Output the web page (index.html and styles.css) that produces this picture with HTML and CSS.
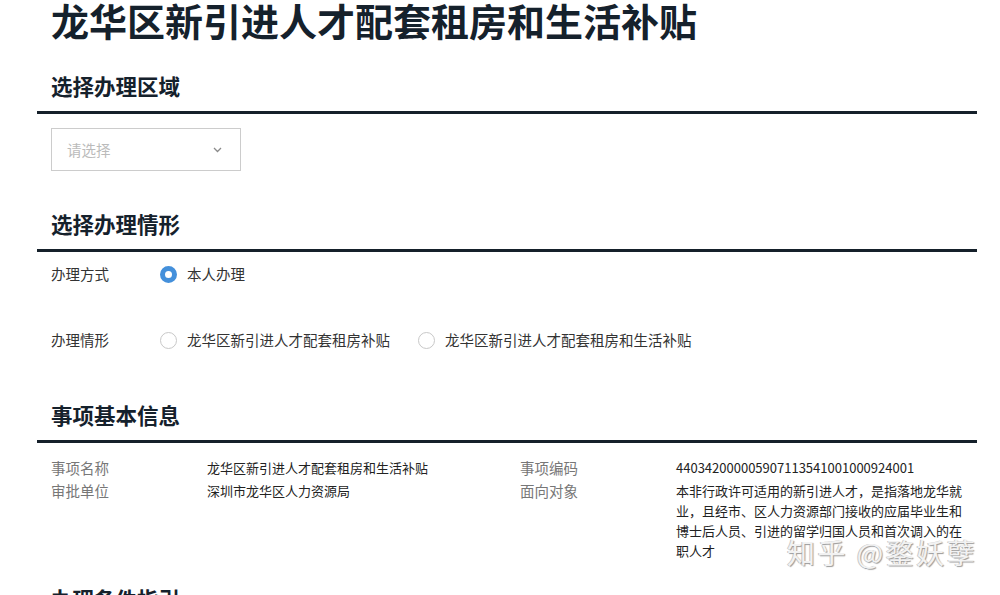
FILE: index.html
```html
<!DOCTYPE html>
<html lang="zh-CN">
  <head>
    <meta charset="UTF-8" />
    <meta name="viewport" content="width=device-width, initial-scale=1.0" />
    <title>龙华区新引进人才配套租房和生活补贴</title>
    <link rel="stylesheet" href="styles.css">
  </head>
  <body>
    <main class="page">
      <h1 class="title">龙华区新引进人才配套租房和生活补贴</h1>

      <section class="section">
        <h2 class="section-head">选择办理区域</h2>
        <div class="select">
          <span class="select-text">请选择</span>
          <svg class="select-arrow" width="9" height="6" viewBox="0 0 9 6">
            <path d="M1 1 L4.5 4.5 L8 1" fill="none" stroke="#8a8a8a" stroke-width="1.3" />
          </svg>
        </div>
      </section>

      <section class="section">
        <h2 class="section-head">选择办理情形</h2>
        <div class="form-row">
          <span class="form-label">办理方式</span>
          <label class="option"><span class="radio checked"></span>本人办理</label>
        </div>
        <div class="form-row">
          <span class="form-label">办理情形</span>
          <label class="option"><span class="radio"></span>龙华区新引进人才配套租房补贴</label>
          <label class="option"><span class="radio"></span>龙华区新引进人才配套租房和生活补贴</label>
        </div>
      </section>

      <section class="section section-info">
        <h2 class="section-head">事项基本信息</h2>
        <div class="info">
          <span class="info-label">事项名称</span>
          <span class="info-value">龙华区新引进人才配套租房和生活补贴</span>
          <span class="info-label">事项编码</span>
          <span class="info-value">440342000005907113541001000924001</span>

          <span class="info-label">审批单位</span>
          <span class="info-value">深圳市龙华区人力资源局</span>
          <span class="info-label">面向对象</span>
          <span class="info-value">本非行政许可适用的新引进人才，是指落地龙华就业，且经市、区人力资源部门接收的应届毕业生和博士后人员、引进的留学归国人员和首次调入的在职人才</span>
        </div>
      </section>

      <section class="section">
        <h2 class="section-head">办理条件指引</h2>
      </section>
    </main>

    <div class="watermark">知乎 @鍪妖孽</div>
  </body>
</html>
```

FILE: styles.css
```css
body {
  margin: 0;
  font-family: "Noto Sans CJK SC", "Noto Sans", sans-serif;
  color: #333;
  background: #fff;
}

.page {
  width: 940px;
  margin-left: 37px;
}

.title {
  margin: -2px 0 0 14px;
  font-size: 38px;
  line-height: 44px;
  font-weight: bold;
  color: #15212c;
}

.section {
  margin-top: 38px;
}

.section:first-of-type {
  margin-top: 29px;
}

.section-info + .section {
  margin-top: 23px;
}

.section-head {
  margin: 0;
  padding: 0 0 10px 14px;
  font-size: 21.5px;
  line-height: 30px;
  font-weight: bold;
  color: #15212c;
  border-bottom: 3px solid #15202a;
}

.select {
  box-sizing: border-box;
  width: 190px;
  height: 43px;
  margin: 14px 0 0 14px;
  padding: 0 18px 0 15px;
  border: 1px solid #ccc;
  display: flex;
  align-items: center;
  justify-content: space-between;
}

.select-text {
  font-size: 14.5px;
  color: #bbb;
}

.form-row {
  height: 44px;
  padding-left: 14px;
  display: flex;
  align-items: center;
  font-size: 14.5px;
  line-height: 20px;
}

.form-row + .form-row {
  margin-top: 22px;
}

.form-label {
  width: 109px;
  color: #333;
}

.option {
  display: flex;
  align-items: center;
  margin-right: 28px;
  color: #333;
}

.radio {
  box-sizing: border-box;
  width: 17px;
  height: 17px;
  margin-right: 10px;
  border: 1px solid #c8c8c8;
  border-radius: 50%;
  background: #fff;
}

.radio.checked {
  border: 5px solid #4490db;
}

.info {
  display: grid;
  grid-template-columns: 156px 313px 156px 290px;
  row-gap: 3px;
  padding: 15px 0 0 14px;
  align-items: start;
}

.info-label {
  font-size: 14.5px;
  line-height: 20px;
  color: #777;
}

.info-value {
  font-size: 13px;
  line-height: 20px;
  color: #222;
}

.watermark {
  position: absolute;
  left: 787px;
  top: 532px;
  font-size: 28px;
  line-height: 40px;
  letter-spacing: 2.5px;
  color: #f2f2f2;
  text-shadow: 1px 1px 1px #9a9a9a, -1px 0 0 #c8c8c8;
}
```
